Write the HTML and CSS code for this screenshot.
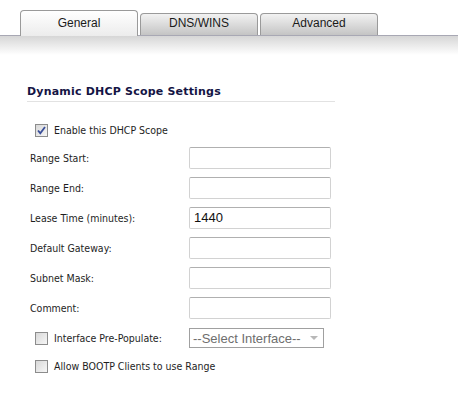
FILE: index.html
```html
<!DOCTYPE html>
<html lang="en">
	<head>
		<meta charset="UTF-8" />
		<title>DHCP Scope</title>
		<link rel="stylesheet" href="styles.css">
	</head>
	<body>
		<div class="tabs">
			<div class="tab tab-active">General</div>
			<div class="tab">DNS/WINS</div>
			<div class="tab">Advanced</div>
		</div>
		<div class="band"></div>
		<div class="section">
			<h2 class="heading">Dynamic DHCP Scope Settings</h2>
			<div class="check-row check-first">
				<span class="box">
					<svg width="11" height="11" viewBox="0 0 11 11">
						<path d="M2 5.5 L4.3 8.2 L9 2" fill="none" stroke="#3a4f9a" stroke-width="1.8" />
					</svg>
				</span>
				<span class="check-label">Enable this DHCP Scope</span>
			</div>
			<div class="row">
				<label class="label">Range Start:</label>
				<div class="field"></div>
			</div>
			<div class="row">
				<label class="label">Range End:</label>
				<div class="field"></div>
			</div>
			<div class="row">
				<label class="label">Lease Time (minutes):</label>
				<div class="field">1440</div>
			</div>
			<div class="row">
				<label class="label">Default Gateway:</label>
				<div class="field"></div>
			</div>
			<div class="row">
				<label class="label">Subnet Mask:</label>
				<div class="field"></div>
			</div>
			<div class="row">
				<label class="label">Comment:</label>
				<div class="field"></div>
			</div>
			<div class="row row-select">
				<div class="label check-inline">
					<span class="box"></span>
					<span class="check-label">Interface Pre-Populate:</span>
				</div>
				<div class="select">
					<span>--Select Interface--</span>
					<span class="arrow"></span>
				</div>
			</div>
			<div class="check-row check-last">
				<span class="box"></span>
				<span class="check-label">Allow BOOTP Clients to use Range</span>
			</div>
		</div>
	</body>
</html>
```

FILE: styles.css
```css
*,
*::before,
*::after {
	box-sizing: border-box;
}
body {
	margin: 0;
	background-color: #ffffff;
	color: #1e1e1e;
	font-family: 'DejaVu Sans Condensed', 'DejaVu Sans', sans-serif;
	font-size: 10.5px;
}
.tabs {
	display: flex;
	align-items: flex-end;
	gap: 2px;
	padding-left: 20px;
	height: 35px;
}
.tab {
	width: 118px;
	height: 22px;
	border: 1px solid #9a9a9a;
	border-bottom: none;
	border-radius: 4px 4px 0 0;
	background: linear-gradient(#f2f2f2, #c4c4c4);
	font-family: 'Liberation Sans', Arial, sans-serif;
	font-size: 12px;
	color: #1a1a1a;
	text-align: center;
	line-height: 19px;
}
.tab-active {
	position: relative;
	z-index: 1;
	height: 26px;
	margin-bottom: -1px;
	background: linear-gradient(#ffffff, #ececec);
	line-height: 24px;
}
.band {
	height: 20px;
	border-top: 1px solid #a8a8b4;
	background: linear-gradient(#d6d6d6, #ffffff);
}
.section {
	padding-left: 27px;
	width: 335px;
}
.heading {
	margin: 30px 0 0;
	padding-bottom: 3px;
	border-bottom: 1px solid #e2e2e2;
	font-family: 'DejaVu Sans', Verdana, sans-serif;
	font-size: 11px;
	font-weight: bold;
	letter-spacing: 0.2px;
	color: #141444;
}
.check-row {
	display: flex;
	align-items: center;
	gap: 6px;
	margin-left: 8px;
	height: 16px;
}
.check-first {
	margin-top: 20px;
	margin-bottom: 5px;
}
.check-last {
	margin-top: 5px;
}
.box {
	display: inline-flex;
	align-items: center;
	justify-content: center;
	width: 13px;
	height: 13px;
	border: 1px solid #8c8c8c;
	background: linear-gradient(135deg, #d8d8d8, #f6f6f6);
}
.row {
	display: flex;
	align-items: center;
	height: 30px;
	padding-left: 3px;
}
.label {
	width: 159px;
}
.field {
	width: 142px;
	height: 22px;
	border: 1px solid #d2d2d2;
	border-top-color: #b0b0b0;
	border-radius: 2px;
	padding: 2px 4px;
	font-family: 'Liberation Sans', Arial, sans-serif;
	font-size: 13px;
	color: #111111;
}
.check-inline {
	display: flex;
	align-items: center;
	gap: 6px;
	padding-left: 5px;
}
.select {
	display: flex;
	align-items: center;
	justify-content: space-between;
	width: 135px;
	height: 20px;
	border: 1px solid #a0a0a0;
	padding: 0 5px 0 3px;
	font-family: 'Liberation Sans', Arial, sans-serif;
	font-size: 13px;
	color: #6e6e6e;
}
.arrow {
	width: 0;
	height: 0;
	border-left: 4px solid transparent;
	border-right: 4px solid transparent;
	border-top: 4px solid #b8b8b8;
}
```
